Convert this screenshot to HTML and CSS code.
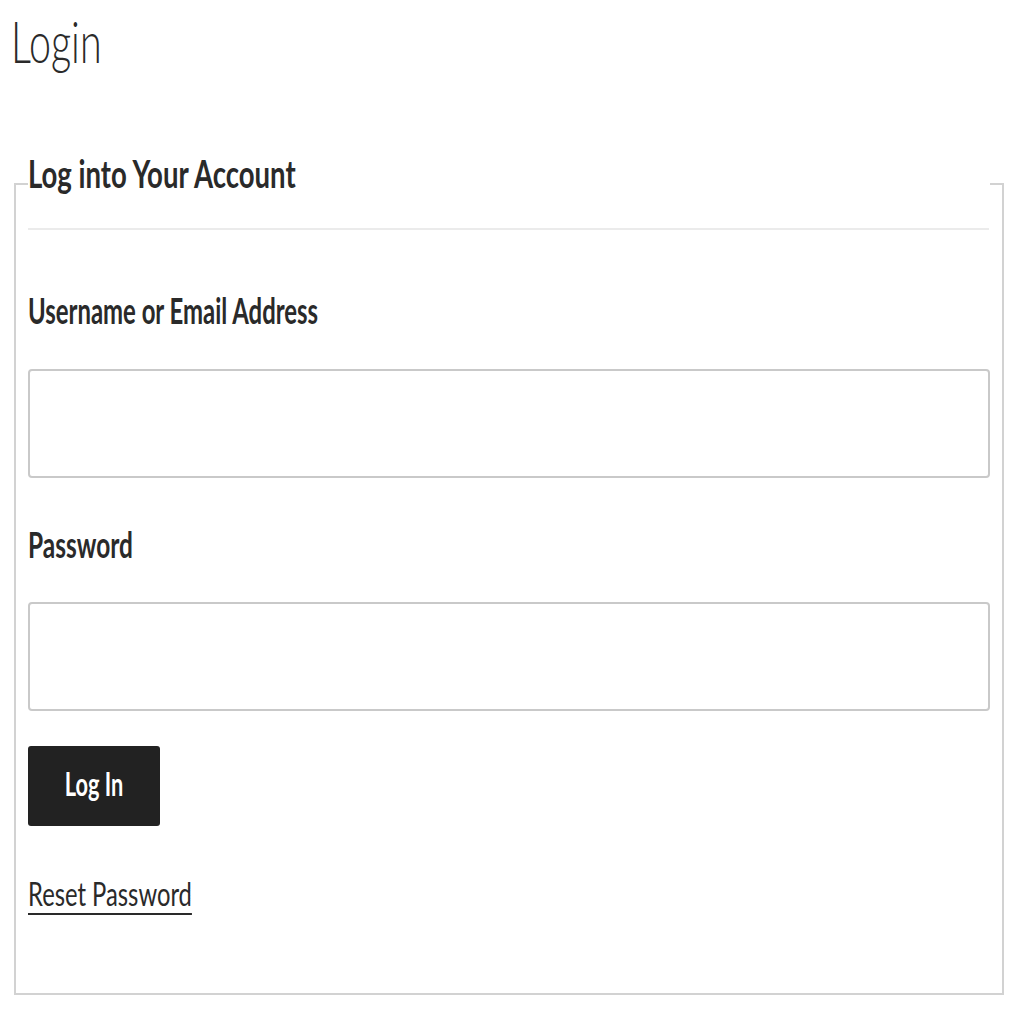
FILE: index.html
```html
<!DOCTYPE html>
<html lang="en">
<head>
  <meta charset="UTF-8">
  <meta name="viewport" content="width=device-width, initial-scale=1.0">
  <title>Login</title>
  <link rel="stylesheet" href="styles.css">
</head>
<body>
  <h1 class="page-title"><span class="narrow">Login</span></h1>

  <form class="login-form">
    <fieldset class="login-box">
      <legend><span class="narrow">Log into Your Account</span></legend>
      <div class="divider"></div>

      <label class="field-label user-label" for="user_login"><span class="narrow">Username or Email Address</span></label>
      <input class="text-input" type="text" id="user_login">

      <label class="field-label pass-label" for="user_pass"><span class="narrow">Password</span></label>
      <input class="text-input" type="password" id="user_pass">

      <button class="submit-button" type="button"><span class="narrow centre">Log In</span></button>

      <p class="reset-link"><a href="#"><span class="narrow">Reset Password</span></a></p>
    </fieldset>
  </form>
</body>
</html>
```

FILE: styles.css
```css
:root {
  --text: #2a2a2a;
  --border: #d2d2d2;
  --input-border: #c9c9c9;
  --divider: #ebebeb;
  --button-bg: #222222;
  --squeeze: 0.68;
}
body {
  margin: 0;
  background-color: #ffffff;
  color: var(--text);
  font-family: Lato, "Noto Sans", sans-serif;
}
.narrow {
  display: inline-block;
  transform: scaleX(var(--squeeze));
  transform-origin: left center;
  white-space: nowrap;
}
.narrow.centre {
  transform-origin: center center;
}
.page-title {
  margin: 6px 0 74px 11px;
  font-size: 58px;
  font-weight: 300;
  line-height: 1.2;
}
.login-form {
  margin: 0;
}
.login-box {
  margin: 0 20px 0 14px;
  padding: 0 12px 80px 12px;
  border: 2px solid var(--border);
  min-width: 0;
}
.login-box legend {
  --squeeze: 0.706;
  width: 100%;
  padding: 0 0 22px 0;
  font-size: 39px;
  font-weight: 700;
  line-height: 1.2;
}
.divider {
  height: 2px;
  margin: 10px 1px 0 0;
  background-color: var(--divider);
}
.field-label {
  display: block;
  margin-top: 59px;
  font-size: 36px;
  font-weight: 700;
  line-height: 1.2;
}
.user-label {
  --squeeze: 0.664;
}
.field-label + .text-input {
  margin-top: 36px;
}
.pass-label {
  margin-top: 45px;
}
.text-input {
  display: block;
  box-sizing: border-box;
  width: 100%;
  height: 109px;
  margin: 0;
  padding: 0 16px;
  border: 2px solid var(--input-border);
  border-radius: 4px;
  background-color: #ffffff;
  font-family: inherit;
  font-size: 30px;
}
.submit-button {
  display: flex;
  align-items: center;
  justify-content: center;
  width: 132px;
  height: 80px;
  margin-top: 35px;
  padding: 0 0 4px 0;
  border: none;
  border-radius: 3px;
  background-color: var(--button-bg);
  color: #ffffff;
  font-family: inherit;
  font-size: 32px;
  font-weight: 700;
  line-height: 1.2;
  cursor: pointer;
}
.reset-link {
  --squeeze: 0.71;
  margin: 47px 0 0 0;
  font-size: 33.5px;
  line-height: 1.2;
}
.reset-link a {
  color: var(--text);
  text-decoration: none;
}
.reset-link a .narrow {
  text-decoration: underline;
  text-decoration-thickness: 2px;
  text-underline-offset: 7px;
}
```
